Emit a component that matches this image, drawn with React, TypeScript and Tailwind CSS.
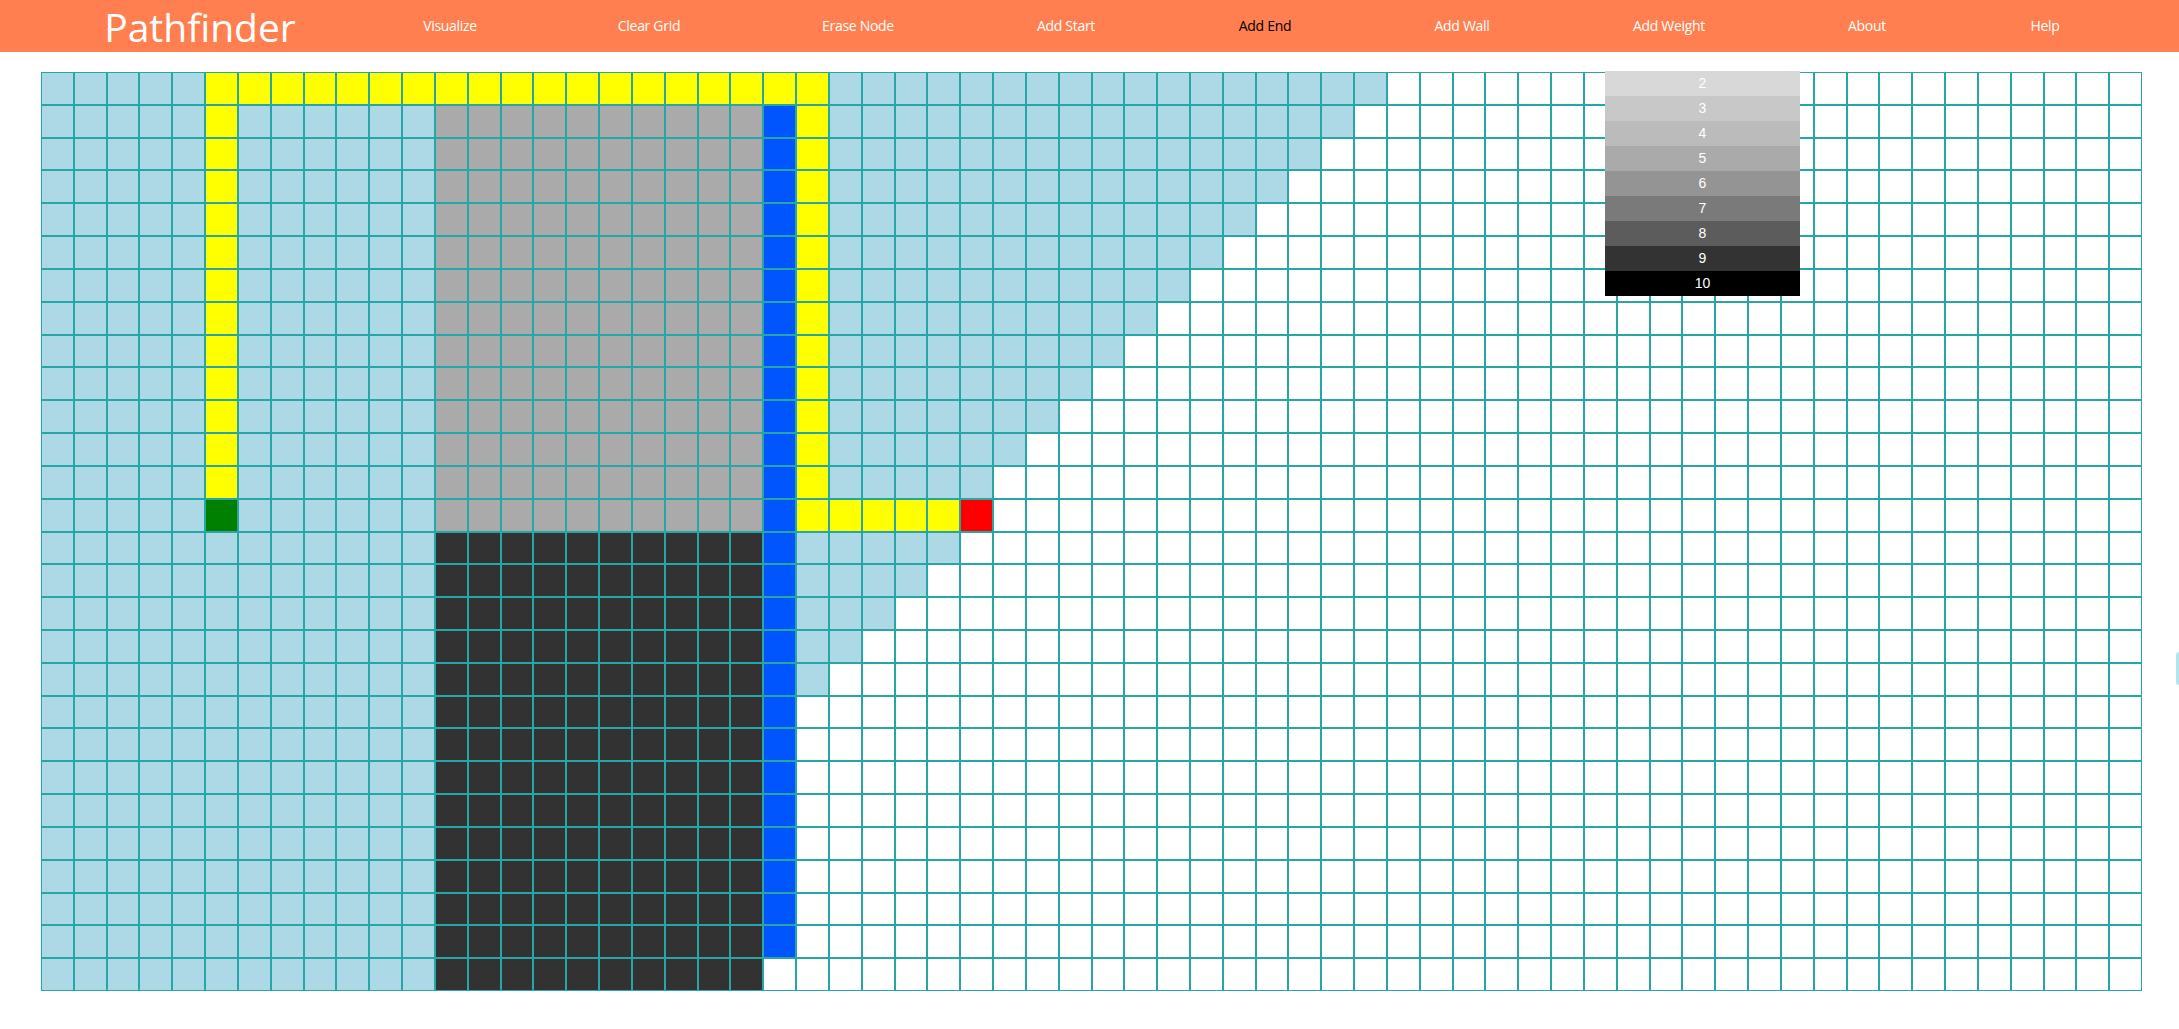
const ROWS = 28;
const COLS = 64;

const navItems = [
  { label: "Visualize", w: "w-[200px]" },
  { label: "Clear Grid", w: "w-[198px]" },
  { label: "Erase Node", w: "w-[220px]" },
  { label: "Add Start", w: "w-[196px]" },
  { label: "Add End", w: "w-[202px]", active: true },
  { label: "Add Wall", w: "w-[192px]" },
  { label: "Add Weight", w: "w-[222px]" },
  { label: "About", w: "w-[174px]" },
  { label: "Help", w: "w-[182px]" },
];

const weights = [
  { n: 2, bg: "bg-[#d8d8d8]" },
  { n: 3, bg: "bg-[#c8c8c8]" },
  { n: 4, bg: "bg-[#bbbbbb]" },
  { n: 5, bg: "bg-[#aaaaaa]" },
  { n: 6, bg: "bg-[#949494]" },
  { n: 7, bg: "bg-[#7a7a7a]" },
  { n: 8, bg: "bg-[#5c5c5c]" },
  { n: 9, bg: "bg-[#333333]" },
  { n: 10, bg: "bg-[#000000]" },
];

// chemin trouvé : départ (13,5) -> haut -> droite -> bas -> arrivée (13,28)
function isPath(r: number, c: number) {
  if (c === 5 && r <= 12) return true;
  if (r === 0 && c >= 5 && c <= 23) return true;
  if (c === 23 && r <= 13) return true;
  if (r === 13 && c >= 23 && c <= 27) return true;
  return false;
}

function cellColor(r: number, c: number) {
  if (r === 13 && c === 5) return "bg-[#008000]";
  if (r === 13 && c === 28) return "bg-[#ff0000]";
  if (isPath(r, c)) return "bg-[#ffff00]";
  if (c === 22 && r >= 1 && r <= 26) return "bg-[#0055ff]";
  if (c >= 12 && c <= 21 && r >= 1 && r <= 13) return "bg-[#aaaaaa]";
  if (c >= 12 && c <= 21 && r >= 14) return "bg-[#323232]";
  if (c <= 11) return "bg-[#add8e6]";
  if (c >= 23 && r <= 12 && c <= 40 - r) return "bg-[#add8e6]";
  if (c >= 23 && r >= 14 && c <= 41 - r) return "bg-[#add8e6]";
  return "bg-white";
}

export default function App() {
  const cells = [];
  for (let r = 0; r < ROWS; r++) {
    for (let c = 0; c < COLS; c++) {
      cells.push(
        <div
          key={`${r}-${c}`}
          className={`border border-[#26a6a6] ${cellColor(r, c)}`}
        />
      );
    }
  }

  return (
    <div className="relative min-h-screen w-full overflow-hidden bg-white">
      <header className="flex h-[52px] items-center bg-[#ff7f50] font-['Open_Sans',sans-serif] text-white">
        <div className="w-[350px] pl-[50px] text-center text-[39px] font-normal leading-none">
          Pathfinder
        </div>
        {navItems.map((item) => (
          <div
            key={item.label}
            className={`${item.w} pb-[2px] text-center text-[14px] tracking-[-0.3px] ${
              item.active ? "text-black" : "text-white"
            }`}
          >
            {item.label}
          </div>
        ))}
      </header>

      <div className="ml-[41px] mt-[20px] grid h-[919px] w-[2101px] grid-cols-[repeat(64,minmax(0,1fr))] grid-rows-[repeat(28,minmax(0,1fr))]">
        {cells}
      </div>

      <div className="absolute left-[1605px] top-[71px] w-[195px] font-['Liberation_Sans',Arial,sans-serif] text-[14px] text-white">
        {weights.map((w) => (
          <div
            key={w.n}
            className={`flex h-[25px] items-center justify-center ${w.bg}`}
          >
            {w.n}
          </div>
        ))}
      </div>

      <div className="absolute right-0 top-[652px] h-[33px] w-[3px] rounded-l bg-[#b2e6ec]" />
    </div>
  );
}
